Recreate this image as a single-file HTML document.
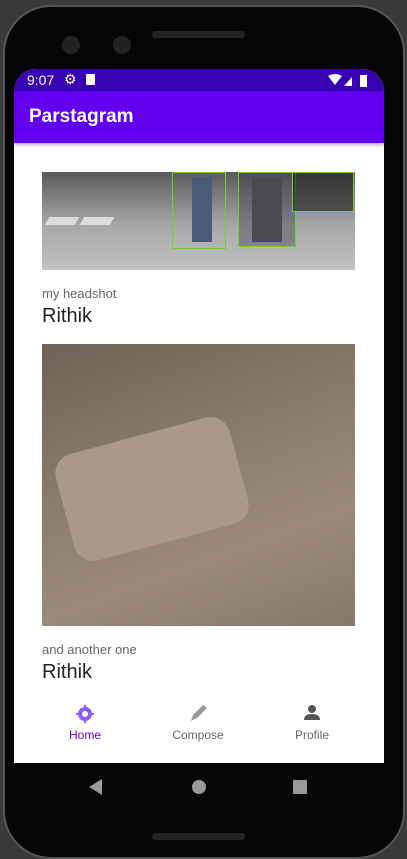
<!DOCTYPE html><html><head><style>
body{margin:0;width:407px;height:845px;background:#3a3a3a;position:relative;overflow:hidden;font-family:"Liberation Sans",sans-serif}
.phone{position:absolute;left:3px;top:5px;width:398px;height:850px;background:#050505;border-radius:48px;border:2px solid #555}
.scr{position:absolute;left:14px;top:69px;width:370px;height:694px;background:#fff;border-radius:22px 22px 0 0;overflow:hidden}
.sb{height:22px;background:#3700B3;color:#fff;font-size:14px;position:relative}
.tb{height:52px;background:#6200EE;color:#fff;font-size:19px;font-weight:600;line-height:52px;padding-left:15px;box-shadow:0 2px 3px rgba(0,0,0,.3)}
.img{position:absolute;left:28px;width:313px}
.cap{position:absolute;left:28px;font-size:13px;color:#666}
.nm{position:absolute;left:28px;font-size:20px;color:#222}
.nav{position:absolute;left:0;top:620px;width:370px;height:74px;background:#fff}
.it{position:absolute;top:39px;font-size:12px;color:#666;text-align:center;width:80px}
</style></head><body>
<div class="phone"></div>
<div style="position:absolute;left:152px;top:31px;width:93px;height:7px;background:#222;border-radius:4px"></div>
<div style="position:absolute;left:62px;top:36px;width:18px;height:18px;background:#222;border-radius:50%"></div>
<div style="position:absolute;left:113px;top:36px;width:18px;height:18px;background:#222;border-radius:50%"></div>
<div style="position:absolute;left:152px;top:833px;width:93px;height:7px;background:#222;border-radius:4px"></div>
<div class="scr">
<div class="sb"><span style="position:absolute;left:13px;top:3px">9:07</span><span style="position:absolute;left:50px;top:2px;font-size:14px">⚙</span><span style="position:absolute;left:72px;top:5px;width:9px;height:11px;background:#fff;border-radius:1px"></span>
<svg style="position:absolute;left:314px;top:5px" width="42" height="13"><path d="M0 2 Q7 -2 14 2 L7 11Z" fill="#fff"/><path d="M16 12 L24 3 V12Z" fill="#fff"/><rect x="32" y="1" width="7" height="12" fill="#fff"/></svg></div>
<div class="tb">Parstagram</div>
<div class="img" style="top:103px;height:98px;background:linear-gradient(180deg,#5a5a5a 0%,#777 20%,#a8a8a8 55%,#c2c2c2 100%)">
<div style="position:absolute;left:5px;top:45px;width:30px;height:8px;background:#ddd;transform:skewX(-30deg)"></div>
<div style="position:absolute;left:40px;top:45px;width:30px;height:8px;background:#ddd;transform:skewX(-30deg)"></div>
<div style="position:absolute;left:150px;top:5px;width:20px;height:65px;background:#4a5a78"></div>
<div style="position:absolute;left:210px;top:5px;width:30px;height:65px;background:#555"></div>
<div style="position:absolute;left:130px;top:0;width:52px;height:75px;border:1px solid #7c3"></div>
<div style="position:absolute;left:196px;top:0;width:56px;height:73px;border:1px solid #7c3;background:rgba(60,60,70,.4)"></div>
<div style="position:absolute;left:250px;top:0;width:60px;height:38px;border:1px solid #7c3;background:rgba(30,30,30,.6)"></div></div>
<div class="cap" style="top:217px">my headshot</div>
<div class="nm" style="top:236px">Rithik</div>
<div class="img" style="top:275px;height:282px;background:linear-gradient(160deg,#6e6256 0%,#8a7c6c 40%,#9a8b7a 70%,#86786a 100%)">
<div style="position:absolute;left:20px;top:90px;width:180px;height:110px;background:#a8998a;transform:rotate(-15deg);border-radius:20px"></div></div>
<div class="cap" style="top:573px">and another one</div>
<div class="nm" style="top:592px">Rithik</div>
<div class="nav">
<svg style="position:absolute;left:62px;top:16px" width="18" height="18" viewBox="0 0 18 18"><circle cx="9" cy="9" r="7" fill="#8a5cf5"/><path d="M9 0V18M0 9H18" stroke="#8a5cf5" stroke-width="2"/><circle cx="9" cy="9" r="3" fill="#fff"/></svg>
<div class="it" style="left:31px;color:#6200EE">Home</div>
<svg style="position:absolute;left:175px;top:14px" width="20" height="20" viewBox="0 0 20 20"><path d="M2 18 L4 12 L14 2 L18 5 L8 15Z" fill="#999"/></svg>
<div class="it" style="left:144px">Compose</div>
<svg style="position:absolute;left:288px;top:14px" width="20" height="20" viewBox="0 0 20 20"><circle cx="10" cy="6" r="4" fill="#555"/><path d="M2 17 Q2 11 10 11 Q18 11 18 17Z" fill="#555"/></svg>
<div class="it" style="left:258px">Profile</div>
</div></div>
<div style="position:absolute;left:14px;top:763px;width:370px;height:62px;background:#050505"></div>
<svg style="position:absolute;left:88px;top:778px" width="230" height="18"><path d="M1 9 L14 1 V17Z" fill="#999"/><circle cx="111" cy="9" r="7" fill="#999"/><rect x="205" y="2" width="14" height="14" rx="1" fill="#999"/></svg>
</body></html>
